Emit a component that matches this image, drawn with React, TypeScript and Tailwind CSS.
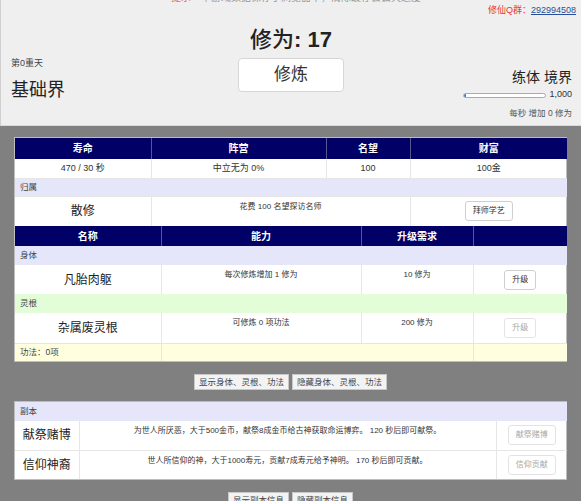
import React from "react";

const font = "font-['Liberation_Sans','Noto_Sans_CJK_SC',sans-serif]";

function Btn({ children, disabled }: { children: React.ReactNode; disabled?: boolean }) {
  return (
    <button
      className={
        "h-[20px] px-[7px] rounded-[3px] border bg-white text-[8px] leading-none " +
        (disabled ? "border-[#e3e3e3] text-[#a8a8a8]" : "border-[#cfcfcf] text-[#333]")
      }
    >
      {children}
    </button>
  );
}

function SmallBtn({ children }: { children: React.ReactNode }) {
  return (
    <button className="h-[16px] px-[4px] border border-[#c8c8c8] bg-[#f3f3f3] text-[8.5px] leading-none text-[#444]">
      {children}
    </button>
  );
}

export default function App() {
  const th = "bg-[#000066] text-white font-bold text-[10px] border-r border-[#55558f] last:border-r-0 text-center";
  const td = "border-r border-[#e6e6e6] last:border-r-0 text-center text-[9px] text-[#333]";
  const desc = "border-r border-[#e6e6e6] last:border-r-0 text-center text-[8px] text-[#333] align-top pt-[4px]";
  const name = "border-r border-[#e6e6e6] text-center text-[12px] text-[#222]";
  const cat = "text-left pl-[5px] text-[8.5px] text-[#444]";
  return (
    <div className={`${font} w-[581px] h-[501px] overflow-hidden bg-[#808080]`}>
      {/* header */}
      <div className="h-[126px] bg-[#efefef] border-b border-[#d8d8d8] border-l border-l-[#cfcfcf]">
        <div className="h-[3px] overflow-hidden flex justify-center">
          <p className="-mt-[10px] text-[10px] text-[#999] whitespace-nowrap pl-[10px]">
            <span className="text-[#e86a6a]">提示</span>
            <span className="ml-[10px]">本游戏数据保存于浏览器中，清除缓存会丢失进度</span>
          </p>
        </div>
        <div className="flex justify-end pr-[5px] mt-[1px] text-[9px] leading-[12px]">
          <span className="text-[#e33]">修仙Q群：</span>
          <span className="text-[#2a4f9a] underline">292994508</span>
        </div>
        <div className="grid grid-cols-[1fr_194px_1fr]">
          <div className="pl-[10px] pt-[41px]">
            <div className="text-[9px] leading-[12px] text-[#444]">第0重天</div>
            <div className="mt-[9px] text-[18px] leading-[24px] text-[#222]">基础界</div>
          </div>
          <div className="flex flex-col items-center pt-[11px]">
            <div className="text-[22px] leading-[26px] text-[#222]">
              <span className="font-medium">修为</span>
              <span className="font-bold">: 17</span>
            </div>
            <button className="mt-[5px] w-[106px] h-[34px] bg-white border border-[#d6d6d6] rounded-[4px] text-[17px] text-[#333]">
              修炼
            </button>
          </div>
          <div className="flex flex-col items-end pr-[9px] pt-[51px]">
            <div className="text-[14px] leading-[20px] text-[#222]">练体 境界</div>
            <div className="mt-[2px] flex items-center h-[12px]">
              <div className="w-[83px] h-[5px] rounded-full border border-[#aaa] bg-white overflow-hidden">
                <div className="w-[2px] h-full bg-[#3b7be0]" />
              </div>
              <span className="ml-[3px] text-[9px] text-[#333]">1,000</span>
            </div>
            <div className="mt-[6px] text-[8.5px] leading-[12px] text-[#555]">每秒 增加 0 修为</div>
          </div>
        </div>
      </div>

      {/* main panel */}
      <div className="px-[14px] pt-[11px]">
        <div className="border border-[#bdbdbd] bg-white">
          <table className="w-full table-fixed border-collapse">
            <colgroup>
              <col className="w-[136px]" />
              <col className="w-[175px]" />
              <col className="w-[84px]" />
              <col className="w-[157px]" />
            </colgroup>
            <tbody>
              <tr className="h-[21px]">
                <th className={th}>寿命</th>
                <th className={th}>阵营</th>
                <th className={th}>名望</th>
                <th className={th}>财富</th>
              </tr>
              <tr className="h-[19px] border-b border-[#e6e6e6]">
                <td className={td}>470 / 30 秒</td>
                <td className={td}>中立无为 0%</td>
                <td className={td}>100</td>
                <td className={td}>100金</td>
              </tr>
              <tr className="h-[18px] bg-[#e6e6fa]">
                <td colSpan={4} className={cat}>归属</td>
              </tr>
              <tr className="h-[30px] border-t border-[#e6e6e6]">
                <td className={name}>散修</td>
                <td colSpan={2} className={desc}>花费 100 名望探访名师</td>
                <td className={td}>
                  <Btn>拜师学艺</Btn>
                </td>
              </tr>
            </tbody>
          </table>
          <table className="w-full table-fixed border-collapse">
            <colgroup>
              <col className="w-[146px]" />
              <col className="w-[200px]" />
              <col className="w-[112px]" />
              <col className="w-[94px]" />
            </colgroup>
            <tbody>
              <tr className="h-[20px]">
                <th className={th}>名称</th>
                <th className={th}>能力</th>
                <th className={th}>升级需求</th>
                <th className={th}></th>
              </tr>
              <tr className="h-[19px] bg-[#e6e6fa]">
                <td colSpan={4} className={cat}>身体</td>
              </tr>
              <tr className="h-[29px]">
                <td className={name}>凡胎肉躯</td>
                <td className={desc}>每次修炼增加 1 修为</td>
                <td className={desc}>10 修为</td>
                <td className={td}>
                  <Btn>升级</Btn>
                </td>
              </tr>
              <tr className="h-[19px] bg-[#e3fdd8]">
                <td colSpan={4} className={cat}>灵根</td>
              </tr>
              <tr className="h-[30px]">
                <td className={name}>杂属废灵根</td>
                <td className={desc}>可修炼 0 项功法</td>
                <td className={desc}>200 修为</td>
                <td className={td}>
                  <Btn disabled>升级</Btn>
                </td>
              </tr>
              <tr className="h-[18px] bg-[#ffffe0] border-t border-[#e6e6e6]">
                <td className={cat + " border-r border-[#e6e6e6]"}>功法：0项</td>
                <td colSpan={2} className="border-r border-[#e6e6e6]"></td>
                <td></td>
              </tr>
            </tbody>
          </table>
        </div>

        <div className="mt-[12px] flex justify-center gap-[3px]">
          <SmallBtn>显示身体、灵根、功法</SmallBtn>
          <SmallBtn>隐藏身体、灵根、功法</SmallBtn>
        </div>

        <div className="mt-[11px] border border-[#bdbdbd] bg-white">
          <table className="w-full table-fixed border-collapse">
            <colgroup>
              <col className="w-[64px]" />
              <col className="w-[417px]" />
              <col className="w-[71px]" />
            </colgroup>
            <tbody>
              <tr className="h-[19px] bg-[#e6e6fa]">
                <td colSpan={3} className={cat}>副本</td>
              </tr>
              <tr className="h-[29px] border-b border-[#e6e6e6]">
                <td className={name}>献祭赌博</td>
                <td className={desc}>为世人所厌恶，大于500金币，献祭8成金币给古神获取命运博弈。 120 秒后即可献祭。</td>
                <td className={td}>
                  <Btn disabled>献祭赌博</Btn>
                </td>
              </tr>
              <tr className="h-[29px]">
                <td className={name}>信仰神裔</td>
                <td className={desc}>世人所信仰的神，大于1000寿元，贡献7成寿元给予神明。 170 秒后即可贡献。</td>
                <td className={td}>
                  <Btn disabled>信仰贡献</Btn>
                </td>
              </tr>
            </tbody>
          </table>
        </div>

        <div className="mt-[12px] flex justify-center gap-[3px]">
          <SmallBtn>显示副本信息</SmallBtn>
          <SmallBtn>隐藏副本信息</SmallBtn>
        </div>
      </div>
    </div>
  );
}
